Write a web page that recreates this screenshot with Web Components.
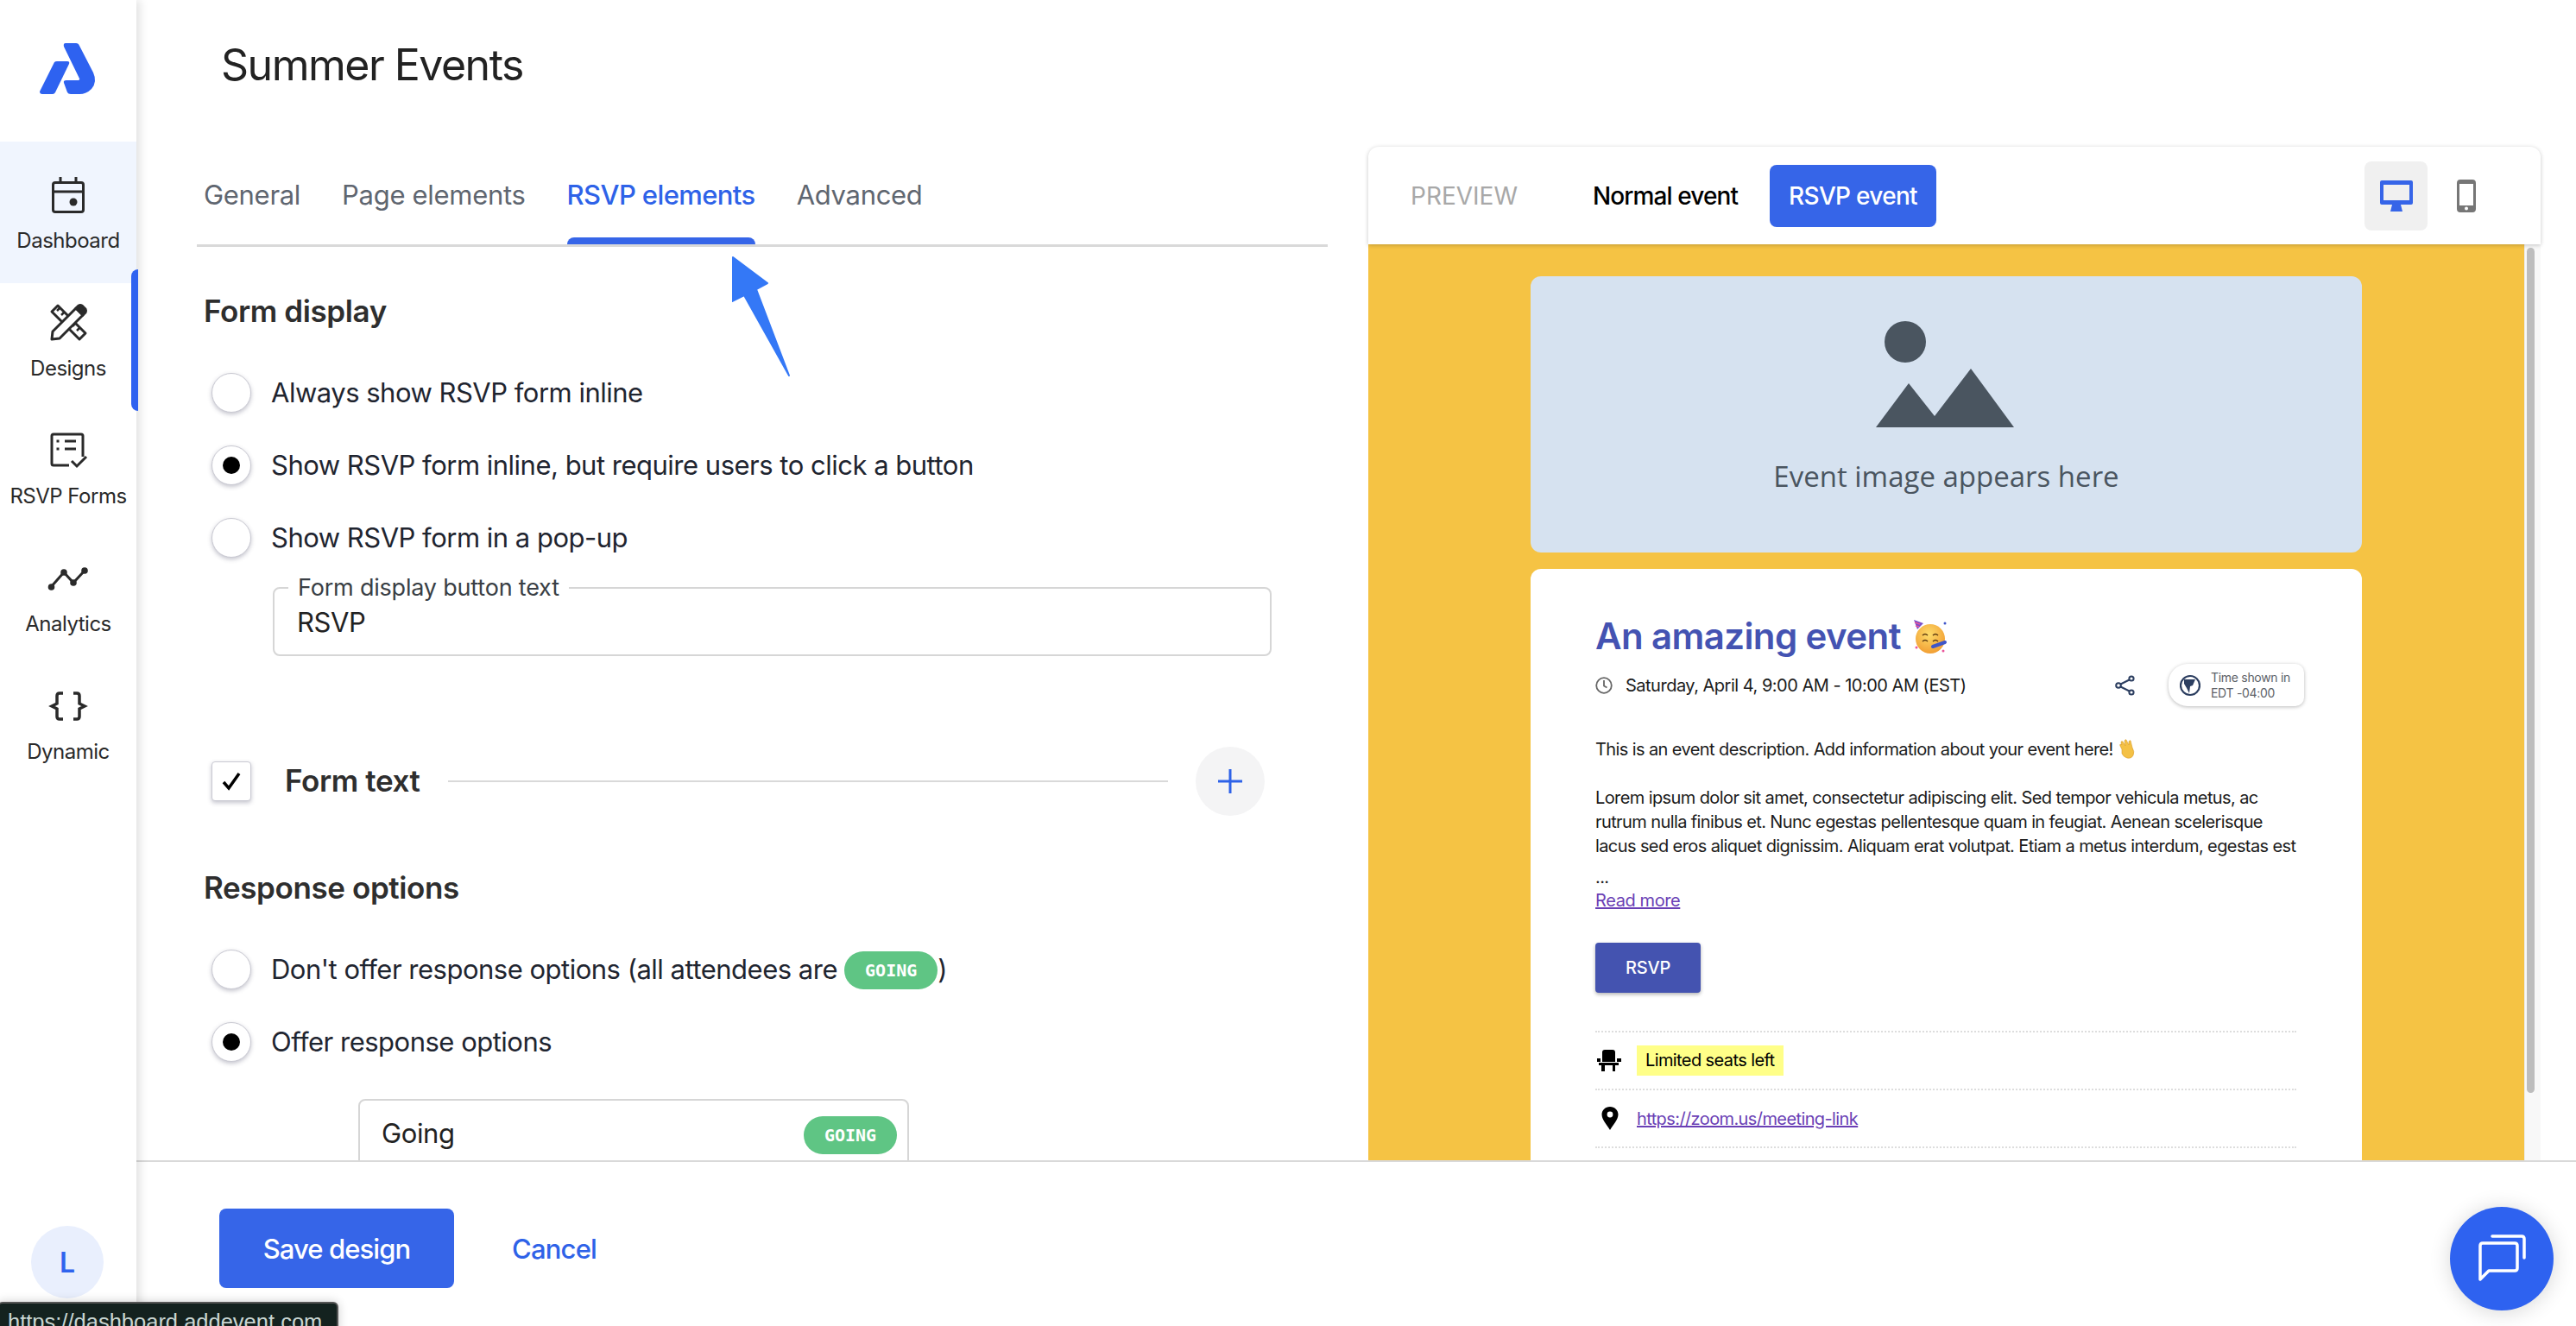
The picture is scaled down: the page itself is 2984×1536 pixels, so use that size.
<!DOCTYPE html>
<html lang="en">
<head>
<meta charset="utf-8">
<title>Summer Events</title>
<style>
  html, body { margin: 0; height: 100%; overflow: hidden; background: #fff; }
  body { font-family: Inter, "Liberation Sans", sans-serif; color: #1f2328; }
</style>
</head>
<body>
<ae-app>
  <ae-sidebar slot="side">
    <ae-nav-item label="Dashboard" active>
      <svg width="48" height="48" viewBox="0 0 48 48" fill="none" stroke="#2a2a2a" stroke-width="3"><rect x="6.5" y="9.5" width="35" height="34" rx="2.5"/><path d="M6 20h36M15 3v7M33 3v7"/><circle cx="30" cy="32" r="4.5" fill="#2a2a2a" stroke="none"/></svg>
    </ae-nav-item>
    <ae-nav-item label="Designs">
      <svg width="48" height="48" viewBox="0 0 48 48" fill="none" stroke="#2a2a2a" stroke-width="3" stroke-linejoin="round"><path d="M5 11l7-7 32 32-7 7z"/><path d="M11 10l3-3M16 15l3-3M29 28l3-3M34 33l3-3" stroke-width="2.5"/><path d="M5 43l1-9L33 7l8 8-27 27z" fill="#fff"/><path d="M33 7l3-3q2-1 4 0l4 4q1 2 0 4l-3 3z" fill="#2a2a2a"/></svg>
    </ae-nav-item>
    <ae-nav-item label="RSVP Forms">
      <svg width="48" height="48" viewBox="0 0 48 48" fill="none" stroke="#2a2a2a" stroke-width="3"><path d="M25 41H7q-2 0-2-2V7q0-2 2-2h32q2 0 2 2v24"/><path d="M20 13h13M20 22h13"/><path d="M10.500 13h3M10.500 22h3"/><path d="M28 36l6 6 11-11"/></svg>
    </ae-nav-item>
    <ae-nav-item label="Analytics">
      <svg width="48" height="48" viewBox="0 0 48 48" fill="none" stroke="#2a2a2a" stroke-width="3"><path d="M4 34l15-17 11 12 13-14"/><g fill="#2a2a2a" stroke="none"><circle cx="4.500" cy="34" r="3.800"/><circle cx="19" cy="17" r="3.800"/><circle cx="30" cy="29" r="3.800"/><circle cx="43" cy="15" r="3.800"/></g></svg>
    </ae-nav-item>
    <ae-nav-item label="Dynamic">
      <svg width="48" height="48" viewBox="0 0 48 48" fill="none" stroke="#2a2a2a" stroke-width="3.500"><path d="M18 9h-4q-3 0-3 3v9l-6 3 6 3v9q0 3 3 3h4"/><path d="M30 9h4q3 0 3 3v9l6 3-6 3v9q0 3-3 3h-4"/></svg>
    </ae-nav-item>
  </ae-sidebar>

  <ae-form-panel slot="form">
    <ae-section-title>Form display</ae-section-title>
    <ae-radio>Always show RSVP form inline</ae-radio>
    <ae-radio checked>Show RSVP form inline, but require users to click a button</ae-radio>
    <ae-radio>Show RSVP form in a pop-up</ae-radio>
    <ae-text-field label="Form display button text" value="RSVP"></ae-text-field>
    <ae-collapse-row label="Form text"></ae-collapse-row>
    <ae-section-title class="second">Response options</ae-section-title>
    <ae-radio>Don't offer response options (all attendees are <ae-badge></ae-badge>)</ae-radio>
    <ae-radio checked>Offer response options</ae-radio>
    <ae-response-row label="Going"></ae-response-row>
  </ae-form-panel>

  <ae-preview slot="preview"></ae-preview>
  <ae-footer slot="footer"></ae-footer>
</ae-app>

<script>
// small base so each element only declares its shadow markup
class Base extends HTMLElement {
  constructor() {
    super();
    this.attachShadow({ mode: 'open' });
  }
  connectedCallback() {
    this.shadowRoot.innerHTML = this.render();
  }
  attr(name) {
    return this.getAttribute(name) || '';
  }
}

class AeApp extends Base {
  render() {
    return `
      <style>
        :host { display: flex; width: 2984px; height: 1536px; position: relative; overflow: hidden; background: #fff; }
        .main { flex: 1; min-width: 0; display: flex; flex-direction: column; }
        .top { height: 1344px; display: flex; overflow: hidden; }
        .left { width: 1427px; flex: none; position: relative; }
        h1 { margin: 0 0 0 98px; height: 150px; line-height: 150px; font-size: 50px; font-weight: 400; color: #222; letter-spacing: -1.5px; }
        .tabs-wrap { margin: 20px 47px 0 70px; }
        .arrow { position: absolute; left: 690px; top: 297px; }
        .status {
          position: absolute; left: -3px; top: 1508px; width: 395px; height: 40px; box-sizing: border-box;
          background: #14221f; border: 2px solid #555; border-radius: 6px; padding-left: 10px;
          color: #c9d6d2; font: 25.5px/42px "Liberation Sans", sans-serif; z-index: 5;
          box-shadow: 0 0 12px rgba(0,0,0,.2);
        }
        .chat {
          position: absolute; left: 2838px; top: 1398px; width: 120px; height: 120px; border-radius: 50%;
          background: #2e62f0; box-shadow: 0 2px 24px rgba(0,0,0,.16);
          display: flex; align-items: center; justify-content: center; z-index: 5;
        }
      </style>
      <slot name="side"></slot>
      <div class="main">
        <div class="top">
          <div class="left">
            <h1>Summer Events</h1>
            <div class="tabs-wrap"><ae-tabs></ae-tabs><slot name="form"></slot></div>
            <svg class="arrow" width="70" height="140" viewBox="848 297 70 140"><path d="M849 298l40 30-13 7 38 100-52-93-14 7z" fill="#3478f6" stroke="#3478f6" stroke-width="2" stroke-linejoin="round"/></svg>
          </div>
          <slot name="preview"></slot>
        </div>
        <slot name="footer"></slot>
      </div>
      <div class="status">https://dashboard.addevent.com</div>
      <div class="chat">
        <svg width="60" height="60" viewBox="0 0 60 60" fill="none" stroke="#fff" stroke-width="3.500" stroke-linecap="round" stroke-linejoin="round"><path d="M5 54V15q0-3 3-3h37q3 0 3 3v26q0 3-3 3H15z"/><path d="M19 4h34q3 0 3 3v22"/></svg>
      </div>
    `;
  }
}

class AeSidebar extends Base {
  render() {
    return `
      <style>
        :host { display: flex; flex-direction: column; width: 158px; height: 1536px; flex: none; position: relative; z-index: 2; background: #fff; box-shadow: 4px 0 10px rgba(0,0,0,.12); }
        .logo { height: 164px; flex: none; display: block; }
        .nav { display: flex; flex-direction: column; }
        .avatar { margin: auto 0 32px 36px; width: 84px; height: 84px; border-radius: 50%; background: #e9effd; color: #2f63ee; font-size: 32px; font-weight: 600; display: flex; align-items: center; justify-content: center; }
      </style>
      <svg class="logo" width="158" height="164" viewBox="0 0 158 164" fill="#2e62f0">
        <path d="M63 72q1-1 3-1h12q3 0 2 3L64 107q-1 2-3 2H49q-3 0-3-3z"/>
        <path d="M76 50h12q3 0 4 3l16 31q5 11-2 19-6 6-14 6H82q-3 0-4-2l-4-11q-1-3 3-3h14q2-1 1-2L74 54q-1-4 2-4z"/>
      </svg>
      <div class="nav"><slot></slot></div>
      <div class="avatar">L</div>
    `;
  }
}

class AeNavItem extends Base {
  render() {
    return `
      <style>
        :host { display: block; height: 164px; margin-bottom: -16px; position: relative; }
        :host([active]) { background: #f0f5fe; }
        .box { display: flex; flex-direction: column; align-items: center; padding-top: 38px; }
        .icon { height: 48px; }
        .label { margin-top: 13px; font-size: 24px; line-height: 32px; color: #2a2a2a; white-space: nowrap; letter-spacing: -0.5px; }
        :host([label="Designs"]) .bar { position: absolute; left: 152px; top: 0; width: 8px; height: 164px; background: #2e62f0; border-radius: 8px 0 0 8px; }
      </style>
      <div class="box"><div class="icon"><slot></slot></div><div class="label">${this.attr('label')}</div></div>
      <div class="bar"></div>
    `;
  }
}

class AeTabs extends Base {
  render() {
    const tabs = ['General', 'Page elements', 'RSVP elements', 'Advanced'];
    return `
      <style>
        :host { display: flex; gap: 48px; height: 113px; padding-left: 8px; border-bottom: 3px solid #d9d9d9; }
        .tab { display: flex; flex-direction: column; font-size: 31px; color: #5f6670; white-space: nowrap; letter-spacing: -0.3px; }
        .tab span { flex: 1; display: flex; align-items: center; padding-top: 6px; }
        .tab i { height: 8px; border-radius: 8px 8px 0 0; }
        .on { color: #2e62e8; font-weight: 500; letter-spacing: -0.6px; }
        .on i { background: #3665e8; }
      </style>
      ${tabs.map(t => `<div class="tab ${t === 'RSVP elements' ? 'on' : ''}"><span>${t}</span><i></i></div>`).join('')}
    `;
  }
}

class AeFormPanel extends Base {
  render() {
    return `
      <style>
        :host { display: flex; flex-direction: column; }
      </style>
      <slot></slot>
    `;
  }
}

class AeSectionTitle extends Base {
  render() {
    return `
      <style>
        :host { display: block; height: 40px; margin: 54px 0 52px 8px; font-size: 35px; line-height: 40px; font-weight: 600; color: #2e2e2e; letter-spacing: -0.4px; }
        :host(.second) { margin-top: 63px; }
      </style>
      <slot></slot>
    `;
  }
}

class AeRadio extends Base {
  render() {
    return `
      <style>
        :host { display: flex; align-items: center; gap: 23px; height: 46px; margin: 0 0 38px 17px; font-size: 31px; color: #1f2530; letter-spacing: -0.5px; white-space: nowrap; }
        .dot { width: 46px; height: 46px; box-sizing: border-box; border-radius: 50%; background: #fff; border: 1px solid #c9c9d2; box-shadow: 0 2px 5px rgba(60,60,90,.3); display: flex; align-items: center; justify-content: center; flex: none; }
        :host([checked]) .dot::after { content: ""; width: 20px; height: 20px; border-radius: 50%; background: #000; }
        .txt { display: block; line-height: 46px; }
      </style>
      <span class="dot"></span><span class="txt"><slot></slot></span>
    `;
  }
}

class AeBadge extends Base {
  render() {
    return `
      <style>
        :host { display: inline-flex; align-items: center; justify-content: center; width: 108px; height: 44px; margin-top: 2px; vertical-align: top; border-radius: 22px; background: #5fc584; color: #fff; font: bold 20px/44px "DejaVu Sans Mono", "Liberation Mono", monospace; letter-spacing: 0; }
      </style>
      GOING
    `;
  }
}

class AeTextField extends Base {
  render() {
    return `
      <style>
        :host { display: block; margin: -20px 65px 0 88px; }
        fieldset { margin: 0; padding: 0 26px 14px; border: 2px solid #d6d6d6; border-radius: 8px; height: 96px; box-sizing: border-box; }
        legend { padding: 0 11px; margin-left: -10px; font-size: 27px; line-height: 34px; color: #3a3f45; letter-spacing: -0.2px; }
        .val { font-size: 31px; line-height: 46px; color: #222; letter-spacing: -0.4px; }
      </style>
      <fieldset><legend>${this.attr('label')}</legend><div class="val">${this.attr('value')}</div></fieldset>
    `;
  }
}

class AeCollapseRow extends Base {
  render() {
    return `
      <style>
        :host { display: flex; align-items: center; gap: 32px; height: 80px; margin: 105px 73px 0 17px; }
        .box { width: 46px; height: 46px; box-sizing: border-box; background: #fff; border: 1px solid #c9c9d2; border-radius: 4px; box-shadow: 0 2px 5px rgba(60,60,90,.3); margin-right: 7px; flex: none; display: flex; align-items: center; justify-content: center; }
        .lbl { font-size: 35px; font-weight: 600; color: #2e2e2e; letter-spacing: -0.4px; white-space: nowrap; padding-bottom: 2px; }
        .line { flex: 1; height: 2px; background: #d9d9d9; }
        .plus { width: 80px; height: 80px; border-radius: 50%; background: #f4f4f5; display: flex; align-items: center; justify-content: center; flex: none; }
      </style>
      <span class="box"><svg width="26" height="24" viewBox="0 0 26 24" fill="none" stroke="#000" stroke-width="3.500"><path d="M4 13l6 7L22 3"/></svg></span>
      <span class="lbl">${this.attr('label')}</span>
      <span class="line"></span>
      <span class="plus"><svg width="28" height="28" viewBox="0 0 28 28" stroke="#2e62e8" stroke-width="3"><path d="M14 0v28M0 14h28"/></svg></span>
    `;
  }
}

class AeResponseRow extends Base {
  render() {
    return `
      <style>
        :host { display: flex; justify-content: space-between; align-items: flex-start; box-sizing: border-box; width: 638px; height: 120px; margin: 5px 0 0 187px; padding: 16px 12px 0 25px; border: 2px solid #d6d6d6; border-radius: 8px; font-size: 31px; color: #222; letter-spacing: -0.4px; }
        span { line-height: 44px; }
      </style>
      <span>${this.attr('label')}</span><ae-badge></ae-badge>
    `;
  }
}

class AePreview extends Base {
  render() {
    return `
      <style>
        :host { display: flex; flex-direction: column; width: 1358px; height: 1174px; margin-top: 170px; flex: none; }
        .head { height: 113px; flex: none; display: flex; align-items: center; padding-left: 49px; background: #fff; border-radius: 12px 12px 0 0; box-shadow: 0 1px 5px rgba(0,0,0,.22); position: relative; z-index: 1; white-space: nowrap; }
        .cap { font-size: 28px; color: #a8a8a8; width: 211px; }
        .normal { font-size: 28px; color: #000; width: 205px; font-weight: 500; letter-spacing: -0.9px; }
        .rsvp { width: 193px; height: 72px; background: #3665e8; color: #fff; font-size: 28px; font-weight: 500; border-radius: 8px; display: flex; align-items: center; justify-content: center; letter-spacing: -0.7px; }
        .dev { width: 73px; height: 80px; margin-left: 496px; background: #f0f0f0; border-radius: 8px; display: flex; align-items: center; justify-content: center; }
        .phone { margin-left: 34px; display: block; }
        .body { flex: 1; min-height: 0; display: flex; }
        .yellow { flex: 1; min-width: 0; background: #f5c344; padding: 37px 188px 0; box-sizing: border-box; overflow: hidden; }
        .track { width: 19px; background: #f8f8f8; border-left: 1px solid #ececec; box-sizing: border-box; padding: 4px 7px 0 2px; }
        .thumb { height: 979px; background: #bdbdbd; border-radius: 5px; }
        .img { height: 320px; background: #d6e2f0; border-radius: 12px; display: flex; flex-direction: column; align-items: center; margin-bottom: 19px; }
        .img svg { margin: 51px 4px 0 0; }
        .img p { margin: 35px 0 0; font: 33px/44px "Open Sans", sans-serif; color: #4a5560; }
      </style>
      <div class="head">
        <span class="cap">PREVIEW</span>
        <span class="normal">Normal event</span>
        <span class="rsvp">RSVP event</span>
        <span class="dev">
          <svg width="38" height="36" viewBox="0 0 38 36" fill="#3665e8"><path d="M2 0h34q2 0 2 2v24q0 2-2 2H24l2 8H12l2-8H2q-2 0-2-2V2q0-2 2-2zm2 5v18h30V5z" fill-rule="evenodd"/></svg>
        </span>
        <svg class="phone" width="22" height="38" viewBox="0 0 22 38" fill="#767676"><path d="M4 0h14q4 0 4 4v30q0 4-4 4H4q-4 0-4-4V4q0-4 4-4zm-1 5v25h16V5z" fill-rule="evenodd"/><circle cx="11" cy="33.500" r="2" fill="#fff"/></svg>
      </div>
      <div class="body">
        <div class="yellow">
          <div class="img">
            <svg width="160" height="124" viewBox="0 0 160 124"><circle cx="34" cy="25" r="24" fill="#4a5560"/><path d="M0 124l38-51 30 38 42-55 50 68z" fill="#4a5560"/></svg>
            <p>Event image appears here</p>
          </div>
          <ae-event-card></ae-event-card>
        </div>
        <div class="track"><div class="thumb"></div></div>
      </div>
    `;
  }
}

class AeEventCard extends Base {
  render() {
    return `
      <style>
        :host { display: block; background: #fff; border-radius: 12px 12px 0 0; padding: 50px 76px 0 75px; height: 700px; box-sizing: border-box; color: #1b1b1b; font-size: 20px; letter-spacing: -0.6px; }
        h2 { margin: 0; height: 56px; display: flex; align-items: center; gap: 13px; font-size: 42px; line-height: 52px; font-weight: 600; color: #4453b2; letter-spacing: -0.6px; }
        .when { display: flex; align-items: center; margin-top: 4px; height: 49px; }
        .when .date { margin-left: 15px; letter-spacing: -0.5px; }
        .share { margin-left: auto; }
        .tz { display: flex; align-items: center; gap: 12px; width: 157px; height: 49px; box-sizing: border-box; margin: 0 -9px 0 38px; padding-left: 13px; border-radius: 22px 10px 10px 22px; background: #fff; box-shadow: 0 1px 4px rgba(0,0,0,.28); font-size: 14px; line-height: 18px; letter-spacing: -0.3px; color: #5d6268; white-space: nowrap; }
        .tz svg { flex: none; }
        p { margin: 0; line-height: 28px; white-space: nowrap; }
        .desc { margin-top: 36px; display: flex; align-items: center; gap: 6px; }
        .lorem { margin-top: 28px; }
        .more { line-height: 26px; margin-top: 9px; }
        a { color: #6a3fb5; text-decoration: underline; }
        .read { display: block; line-height: 28px; letter-spacing: -0.4px; }
        .btn { width: 122px; height: 58px; margin-top: 35px; background: #4453b0; color: #fff; border-radius: 4px; box-shadow: 0 2px 4px rgba(0,0,0,.3); display: flex; align-items: center; justify-content: center; font-weight: 500; letter-spacing: -0.2px; }
        .rows { margin-top: 44px; border-top: 2px dotted #ddd; }
        .row { height: 65px; display: flex; align-items: center; border-bottom: 2px dotted #ddd; }
        .row svg { width: 30px; flex: none; margin-left: 2px; margin-right: 16px; }
        mark { background: #ffff88; color: #000; padding: 0 10px; height: 35px; line-height: 35px; }
      </style>
      <h2>An amazing event
        <svg width="42" height="42" viewBox="0 0 42 42">
          <defs><radialGradient id="f" cx=".45" cy=".35" r=".7"><stop offset="0" stop-color="#fddc6a"/><stop offset="1" stop-color="#f19a2f"/></radialGradient></defs>
          <circle cx="21" cy="24" r="17" fill="url(#f)"/>
          <path d="M2 2l11 4-7 7z" fill="#7a4fc9"/><path d="M3 5l6 2M4 9l4 1" stroke="#e9559a" stroke-width="1.500"/>
          <path d="M12 20q3-3 6 0M24 20q3-3 6 0M12 27q3-3 6 0M24 27q3-3 6 0" fill="none" stroke="#5e3a10" stroke-width="1.500"/>
          <path d="M24 33l14-5" stroke="#3f56c9" stroke-width="4" stroke-linecap="round"/>
          <circle cx="38" cy="6" r="1.500" fill="#3f56c9"/><circle cx="5" cy="34" r="1.500" fill="#e9559a"/><circle cx="36" cy="38" r="1.500" fill="#e9559a"/>
        </svg>
      </h2>
      <div class="when">
        <svg width="20" height="20" viewBox="0 0 20 20" fill="none" stroke="#666" stroke-width="1.800"><circle cx="10" cy="10" r="8.800"/><path d="M10 4v6.500l3.500 2"/></svg>
        <span class="date">Saturday, April 4, 9:00 AM - 10:00 AM (EST)</span>
        <svg class="share" width="24" height="24" viewBox="0 0 24 24" fill="none" stroke="#2c3e60" stroke-width="2"><circle cx="19" cy="4" r="2.600"/><circle cx="4" cy="12" r="2.800"/><circle cx="19" cy="20" r="2.600"/><path d="M6.500 10.500l10-5M6.500 13.500l10 5"/></svg>
        <span class="tz">
          <svg width="24" height="26" viewBox="0 0 24 26"><circle cx="12" cy="13" r="11" fill="#fff" stroke="#2c3e60" stroke-width="2.200"/><path d="M5 6h13l-3 7-3 1-1 8-3-6-3-5z" fill="#2c3e60"/></svg>
          <span>Time shown in<br>EDT -04:00</span>
        </span>
      </div>
      <p class="desc">This is an event description. Add information about your event here!
        <svg width="22" height="24" viewBox="0 0 22 24"><path d="M4 12L2 8q-1-2 1-2l1 1-1-3q0-2 2-1l3 5-1-6q1-2 2-1l3 6 0-4q1-2 2-1l2 8q3 5 1 9-2 4-7 3-4-1-6-5z" fill="#f4c145" stroke="#d99a2a" stroke-width=".6"/></svg>
      </p>
      <div class="lorem">
        <p>Lorem ipsum dolor sit amet, consectetur adipiscing elit. Sed tempor vehicula metus, ac</p>
        <p>rutrum nulla finibus et. Nunc egestas pellentesque quam in feugiat. Aenean scelerisque</p>
        <p>lacus sed eros aliquet dignissim. Aliquam erat volutpat. Etiam a metus interdum, egestas est</p>
      </div>
      <p class="more">...</p>
      <a class="read">Read more</a>
      <div class="btn">RSVP</div>
      <div class="rows">
        <div class="row">
          <svg height="26" viewBox="2 0 30 26" fill="#000"><path d="M8 3q0-3 3-3h9q3 0 3 3v11H8zM1 10h5v4H1zM25 10h5v4h-5zM4 15h23v3h-4v7h-3v-7h-9v7H7v-7H4z"/></svg>
          <mark>Limited seats left</mark>
        </div>
        <div class="row">
          <svg height="27" viewBox="0 0 30 27"><path d="M15 0c5.500 0 9.500 4 9.500 9 0 6-6 12-9.500 18-3.500-6-9.500-12-9.500-18 0-5 4-9 9.500-9z" fill="#000"/><circle cx="15" cy="9" r="3.400" fill="#fff"/></svg>
          <a>https://zoom.us/meeting-link</a>
        </div>
      </div>
    `;
  }
}

class AeFooter extends Base {
  render() {
    return `
      <style>
        :host { flex: 1; display: flex; align-items: flex-start; padding: 54px 0 0 96px; border-top: 2px solid #d9d9d9; background: #fff; font-size: 31px; }
        .save { width: 272px; height: 92px; display: flex; align-items: center; justify-content: center; background: #3665e8; color: #fff; font-weight: 500; border-radius: 8px; letter-spacing: -0.9px; }
        .cancel { height: 92px; display: flex; align-items: center; margin-left: 67px; color: #2e62e8; font-weight: 500; letter-spacing: -0.8px; }
      </style>
      <div class="save">Save design</div>
      <div class="cancel">Cancel</div>
    `;
  }
}

customElements.define('ae-app', AeApp);
customElements.define('ae-sidebar', AeSidebar);
customElements.define('ae-nav-item', AeNavItem);
customElements.define('ae-tabs', AeTabs);
customElements.define('ae-form-panel', AeFormPanel);
customElements.define('ae-section-title', AeSectionTitle);
customElements.define('ae-radio', AeRadio);
customElements.define('ae-badge', AeBadge);
customElements.define('ae-text-field', AeTextField);
customElements.define('ae-collapse-row', AeCollapseRow);
customElements.define('ae-response-row', AeResponseRow);
customElements.define('ae-preview', AePreview);
customElements.define('ae-event-card', AeEventCard);
customElements.define('ae-footer', AeFooter);
</script>
</body>
</html>
